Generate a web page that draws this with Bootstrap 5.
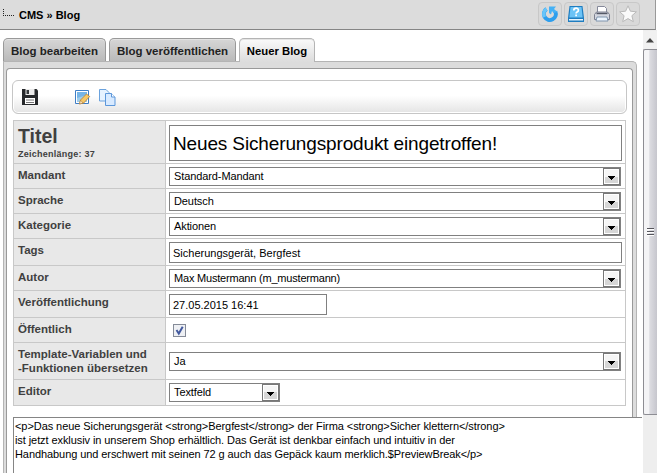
<!DOCTYPE html>
<html lang="de">
<head>
<meta charset="utf-8">
<title>CMS » Blog</title>
<link href="https://cdn.jsdelivr.net/npm/bootstrap@5.3.0/dist/css/bootstrap.min.css" rel="stylesheet">
<style>
body{font-family:"Liberation Sans",Arial,sans-serif;font-size:11px;line-height:14px;color:#000;background:#fff;height:473px}
.topbar{height:30px;background:#dcdcdc;border-bottom:1px solid #858585;border-right:1px solid #999;width:656px;padding:0 15px 0 3px}
.crumb-dots{width:11px;height:7px;border-left:1px dotted #222;border-bottom:1px dotted #222;margin-right:5px;margin-top:-4px}
.crumb{font-size:11px}
.tools{gap:2px;margin-top:-2px}
.tool-btn{width:24px;height:24px;border:1px solid #c8c8c8;border-radius:4px;background:#d9d9d9}
.viewport{height:443px}
.page-area{width:643px;padding:8px 0 0 3px}
.tabs{height:23px;gap:3px}
.tab-item{height:23px;border:1px solid #999;border-bottom:0;border-radius:5px 5px 0 0;background:linear-gradient(#d6d6d6,#bababa);color:#222;font-weight:bold;font-size:11.5px;line-height:25px;text-align:center;box-shadow:inset 0 1px #e4e4e4}
.tab-item.current{height:24px;background:linear-gradient(#fafafa,#dcdcdc);border-color:#b4b4b4;color:#000;z-index:1;font-size:11.3px}
.w-a{width:103px}.w-b{width:127px}.w-c{width:76px}
.frame-outer{width:634px;height:412px;border:1px solid #b4b4b4;border-bottom:0;border-radius:0 5px 0 0;background:#dcdcdc;padding:6px 3px 0 2px}
.frame-inner{height:405px;border:1px solid #999;border-bottom:0;border-radius:4px 4px 0 0;background:#fff;padding:11px 5px 0}
.toolbar-strip{height:34px;border:1px solid #c6c6c6;border-radius:6px;background:linear-gradient(#fff 45%,#e4e4e4);box-shadow:inset 0 0 0 1px #fff;padding:0 8px}
.form-grid{width:613px;margin:6px 0 0 1px;border:1px solid #c8c8c8;border-bottom:0;height:286px}
.frow{border-bottom:1px solid #c8c8c8}
.flabel{width:152px;background:#e8e8e8;border-right:1px solid #c8c8c8;color:#404040;font-weight:bold;font-size:11.5px;line-height:14px;padding:4px 0 0 4px;flex:none}
.fcell{padding:3px 3px 0}
.h43{height:43px}.h25{height:25px}.h27{height:27px}.h37{height:37px}.h26{height:26px}
.box{background:#fff;border:1px solid #808080;height:21px;line-height:20px;padding:0 3px;white-space:nowrap}
.date-box{width:158px}
.pick{height:19px;width:452px;line-height:17px;padding:0 0 0 4px;letter-spacing:-.1px}
.pick.tight{letter-spacing:-.2px}
.pick.narrow{width:111px}
.arrow{width:17px;height:17px;border:1px solid #777;background:linear-gradient(#f5f5f5 50%,#d6d6d6 50%);box-shadow:inset 0 0 0 1px #fff;flex:none}
.title-box{height:36px;font-size:19px;line-height:35px;letter-spacing:-.14px}
.title-label{font-size:19.5px;line-height:23px}
.len-label{font-size:9px;line-height:12px;letter-spacing:.25px}
.check{width:13px;height:13px;border:1px solid #858b98;background:#eef0f4;margin:3px 0 0 4px}
.source{width:629px;height:56px;margin:11px 0 0 1px;border-top:1px solid #858585;border-left:1px solid #858585;background:#fff;padding:1px;font-size:11px;line-height:14px;white-space:pre;z-index:2}
.src-a{letter-spacing:-.07px}.src-b{letter-spacing:-.08px}.src-c{letter-spacing:-.08px}
.scroller{width:14px;background:#eee}
.scroll-up{height:18px;background:#f1f1f1;margin-top:1px}
.thumb{height:366px;border:1px solid #8d8d93;border-right:0;border-radius:2px 0 0 2px;background:linear-gradient(90deg,#f4f4f6 0 35%,#dcdce1 45%,#c6c6cd)}
</style>
<script src="https://cdn.jsdelivr.net/npm/bootstrap@5.3.0/dist/js/bootstrap.bundle.min.js"></script>
</head>
<body class="overflow-hidden">
<header class="topbar d-flex align-items-center">
  <span class="crumb-dots"></span><span class="crumb fw-bold">CMS » Blog</span>
  <div class="tools d-flex ms-auto">
    <span class="tool-btn d-flex align-items-center justify-content-center"><svg width="18" height="18" viewBox="0 0 18 18"><path d="M5.500 4A6 6 0 1 0 14.300 6.500" fill="none" stroke="#2d9eed" stroke-width="4"/><path d="M5.500 4A6 6 0 0 0 3.500 12" fill="none" stroke="#67c5fa" stroke-width="3.500"/><path d="M8 1.500h7L13 4l3.500 3-4 1-1.500-2-1 3.500L8 8z" fill="#45b1f5"/></svg></span>
    <span class="tool-btn d-flex align-items-center justify-content-center"><svg width="18" height="18" viewBox="0 0 18 18"><path d="M2.500 1h13L17 13v4H1v-4z" fill="#1f7dc0"/><path d="M3.500 2h11l1.200 10.500H2.300z" fill="#6cc3f6"/><path d="M2 14h14v1.500H2z" fill="#e8f6ff"/><path d="M6.800 5.500c0-3 4.600-3 4.600-.3 0 1.900-2.300 1.800-2.300 3.200M9.100 9.500v1.700" stroke="#fff" stroke-width="1.700" fill="none"/></svg></span>
    <span class="tool-btn d-flex align-items-center justify-content-center"><svg width="18" height="18" viewBox="0 0 18 18"><path d="M4.500 8V1.500h7l2 2V8" fill="#fff" stroke="#85899a"/><path d="M1.500 9.500l2-2.500h11l2 2.500v5h-15z" fill="#d4d7e0" stroke="#7c8090"/><path d="M3.500 8.500h11" stroke="#555966" stroke-width="1.400"/><path d="M4 12h10l1 4H3z" fill="#edf6ff" stroke="#8095ad"/></svg></span>
    <span class="tool-btn d-flex align-items-center justify-content-center"><svg width="18" height="18" viewBox="0 0 18 18"><path d="M9 .8l2.400 5.400 6 .6-4.500 3.900 1.400 6L9 13.600l-5.300 3.100 1.400-6L.6 6.800l6-.6z" fill="#fafafa" stroke="#b9b9b9"/></svg></span>
  </div>
</header>
<div class="viewport d-flex">
  <main class="page-area">
    <nav class="tabs d-flex">
      <div class="tab-item w-a"><span>Blog bearbeiten</span></div>
      <div class="tab-item w-b"><span>Blog veröffentlichen</span></div>
      <div class="tab-item current position-relative w-c"><span>Neuer Blog</span></div>
    </nav>
    <section class="frame-outer"><div class="frame-inner">
      <div class="toolbar-strip d-flex align-items-center">
        <svg width="18" height="18" viewBox="0 0 18 18"><path d="M1 1h14.500L17 2.500V17H1z" fill="#26282b"/><path d="M4.500 1h9v6h-9z" fill="#ececec"/><path d="M5.500 2h2.500v4H5.500z" fill="#35383b"/><path d="M4 10h10v6H4z" fill="#fff"/><path d="M5 12h8M5 14.500h8" stroke="#777"/></svg>
        <svg class="ms-4" width="28" height="17" viewBox="-11 0 28 17"><path d="M1.500 1.500h13v13h-13z" fill="#fff" stroke="#3e7ec6"/><path d="M3 3h10v10H3z" fill="#76b5e7"/><path d="M3 9l10-3v7H3z" fill="#9fcdec"/><path d="M5.500 15l1-4 6-6 3.200 2.500-6 6.500z" fill="#f6c867" stroke="#b9802d" stroke-width=".8"/><path d="M5.500 15l1-3.500 2.500 2.200z" fill="#fff0d0" stroke="#a77131" stroke-width=".5"/></svg>
        <svg class="ms-2" width="17" height="17" viewBox="0 0 17 17"><path d="M.5.500h6.500l3 3v8.500H.5z" fill="#e6f2ff" stroke="#6ba2dd"/><path d="M6.500 4.500h6l3.500 3.500v8.500H6.500z" fill="#d8eaff" stroke="#5c97da"/><path d="M12.500 4.500V8H16" fill="#fff" stroke="#5c97da"/></svg>
      </div>
      <div class="form-grid">
        <div class="frow d-flex h43"><div class="flabel"><div class="title-label">Titel</div><div class="len-label">Zeichenlänge: 37</div></div><div class="fcell flex-grow-1 pt-1"><div class="box title-box"><span>Neues Sicherungsprodukt eingetroffen!</span></div></div></div>
        <div class="frow d-flex h25"><div class="flabel"><span>Mandant</span></div><div class="fcell"><div class="box pick d-flex justify-content-between"><span>Standard-Mandant</span><i class="arrow"></i></div></div></div>
        <div class="frow d-flex h25"><div class="flabel"><span>Sprache</span></div><div class="fcell"><div class="box pick d-flex justify-content-between"><span>Deutsch</span><i class="arrow"></i></div></div></div>
        <div class="frow d-flex h25"><div class="flabel"><span>Kategorie</span></div><div class="fcell"><div class="box pick d-flex justify-content-between"><span>Aktionen</span><i class="arrow"></i></div></div></div>
        <div class="frow d-flex h27"><div class="flabel"><span>Tags</span></div><div class="fcell flex-grow-1"><div class="box"><span>Sicherungsgerät, Bergfest</span></div></div></div>
        <div class="frow d-flex h25"><div class="flabel"><span>Autor</span></div><div class="fcell"><div class="box pick tight d-flex justify-content-between"><span>Max Mustermann (m_mustermann)</span><i class="arrow"></i></div></div></div>
        <div class="frow d-flex h27"><div class="flabel"><span>Veröffentlichung</span></div><div class="fcell"><div class="box date-box"><span>27.05.2015 16:41</span></div></div></div>
        <div class="frow d-flex h25"><div class="flabel"><span>Öffentlich</span></div><div class="fcell"><div class="check d-flex"><svg width="11" height="11" viewBox="0 0 11 11"><path d="M2.500 5l2.300 3.500L8.700 1.800" fill="none" stroke="#42599e" stroke-width="2"/></svg></div></div></div>
        <div class="frow d-flex h37"><div class="flabel"><span>Template-Variablen und</span><br><span>-Funktionen übersetzen</span></div><div class="fcell align-self-center pt-0"><div class="box pick d-flex justify-content-between"><span>Ja</span><i class="arrow"></i></div></div></div>
        <div class="frow d-flex h26"><div class="flabel"><span>Editor</span></div><div class="fcell"><div class="box pick narrow d-flex justify-content-between"><span>Textfeld</span><i class="arrow"></i></div></div></div>
      </div>
      <div class="source position-relative"><span class="src-a">&lt;p&gt;Das neue Sicherungsgerät &lt;strong&gt;Bergfest&lt;/strong&gt; der Firma &lt;strong&gt;Sicher klettern&lt;/strong&gt;</span>
<span class="src-b">ist jetzt exklusiv in unserem Shop erhältlich. Das Gerät ist denkbar einfach und intuitiv in der</span>
<span class="src-c">Handhabung und erschwert mit seinen 72 g auch das Gepäck kaum merklich.$PreviewBreak&lt;/p&gt;</span></div>
    </div></section>
  </main>
  <aside class="scroller">
    <div class="scroll-up d-flex align-items-center justify-content-center"><svg width="8" height="5" viewBox="0 0 8 5"><path d="M0 4.500L4 0l4 4.500z" fill="#444"/></svg></div>
    <div class="thumb d-flex align-items-center justify-content-center"><svg width="8" height="10" viewBox="0 0 8 10"><path d="M0 1.500h7M0 4.500h7M0 7.500h7" stroke="#55555c"/><path d="M0 2.500h7M0 5.500h7M0 8.500h7" stroke="#fff"/></svg></div>
  </aside>
</div>
<script>
document.querySelectorAll('.arrow').forEach(function(a){a.innerHTML='<svg class="d-block" width="15" height="15" viewBox="0 0 15 15" shape-rendering="crispEdges"><path d="M4 7h7v1h-1v1H9v1H8v1H7v-1H6V9H5V8H4z" fill="#000"/></svg>'});
</script>
</body>
</html>
